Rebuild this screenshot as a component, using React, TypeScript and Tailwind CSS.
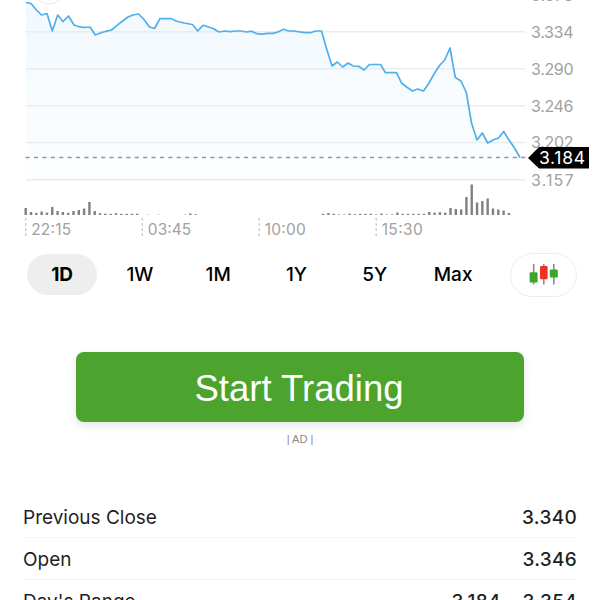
import { clsx } from 'clsx';

type Point = readonly [x: number, y: number];

const pricePoints: readonly Point[] = [
  [26, 2.5], [31, 3.5], [36, 9.5], [41.5, 15], [47, 13.5], [52.3, 31], [57.7, 15], [63, 21.5], [68.5, 16],
  [74, 25], [79, 26.7], [84.5, 27.5], [90, 27], [95.3, 35], [101, 32.7], [106, 31.3], [111.5, 30],
  [117, 25.3], [122.5, 21], [128, 17], [133, 15], [138.5, 14], [144, 19.5], [149.5, 27], [154.5, 28.5],
  [160, 18.5], [171, 18.6], [176, 21], [184, 23], [192.5, 24.5], [197.7, 31], [203, 25.3], [208.5, 27],
  [213.5, 28.7], [219, 32], [224.5, 31], [230, 31.7], [235.5, 31], [241, 31], [246.5, 32], [251.5, 31.2],
  [257, 33.7], [262, 34.2], [267.5, 33.4], [273, 33.4], [278.5, 31.7], [283.5, 29.3], [288.5, 31], [294, 31],
  [299.5, 31.8], [305, 32.7], [310.5, 32.7], [315.5, 31], [321.5, 31], [326.7, 49], [332, 66], [337.3, 62],
  [342.7, 67], [348, 63], [353.3, 66], [358.7, 66.3], [364, 70], [369.5, 64.5], [380.5, 64.5], [385.5, 72.7],
  [396.5, 72.7], [401.7, 83.3], [407, 87.3], [412.5, 91], [417.7, 89], [423.5, 91], [428.7, 83.5],
  [434, 74], [439.5, 65.5], [444.7, 60], [450, 48], [455.3, 77.5], [461, 81], [466.3, 92.5], [471.5, 123],
  [477, 140], [482.3, 133], [487.7, 143], [493, 140], [498.5, 138], [503.7, 131.5], [509, 140], [514.5, 148],
  [520, 157.5],
];

// Bars are spaced evenly from the left edge of the plot
const volumeStep = 5.31;
const volumes: readonly number[] = [
  7, 3, 2.2, 3.5, 2.4, 8, 4, 3, 2.2, 4, 5, 6.5, 13, 4, 1.8, 1.4, 1.2, 1.8, 1.2, 1.2, 1.2, 1.2,
  0, 0.3, 0, 0.3, 0, 0, 0, 0, 0.3, 1.5, 0.8, 0, 0, 0, 0, 0, 0, 0, 0, 0, 0, 0, 0, 0, 0, 0, 0, 0, 0, 0, 0, 0, 0, 0,
  1.2, 2, 1.2, 0.5, 0.5, 1.4, 0.8, 1.2, 1.2, 1.2, 0.5, 1.5, 0.5, 0.6, 2.5, 1.2, 1.2, 1.2, 1.2, 1.2,
  3, 2.4, 2.8, 2.3, 7, 6, 5.5, 18, 30.5, 12.5, 14, 16.5, 6.5, 5.5, 4.5, 2,
];

const gridLines = [
  { y: -5, label: '3.378' },
  { y: 31.8, label: '3.334' },
  { y: 68.8, label: '3.290' },
  { y: 105.8, label: '3.246' },
  { y: 142.6, label: '3.202' },
  { y: 179.8, label: '3.157' },
];

const timeTicks = [
  { x: 25.7, label: '22:15', width: 40 },
  { x: 142.3, label: '03:45', width: 43.5 },
  { x: 259.2, label: '10:00', width: 41 },
  { x: 376.2, label: '15:30', width: 41 },
];

const ranges = [
  { label: '1D', active: true },
  { label: '1W' },
  { label: '1M' },
  { label: '1Y' },
  { label: '5Y' },
  { label: 'Max' },
];

const stats = [
  { label: 'Previous Close', value: '3.340' },
  { label: 'Open', value: '3.346' },
  { label: "Day's Range", value: '3.184 - 3.354' },
];

function PriceChart() {
  const line = pricePoints.map(([x, y]) => `${x},${y}`).join(' ');

  return (
    <svg width="600" height="244" viewBox="0 0 600 244" className="block shrink-0">
      <defs>
        <linearGradient id="area" x1="0" y1="0" x2="0" y2="1">
          <stop offset="0" stopColor="#f2f8fd" />
          <stop offset="0.6" stopColor="#f8fcff" />
          <stop offset="1" stopColor="#fdfeff" />
        </linearGradient>
      </defs>

      <polygon points={`26,180 ${line} 520,180`} fill="url(#area)" />
      {gridLines.map(({ y, label }) => (
        <g key={label}>
          <line x1="26" x2="525" y1={y} y2={y} stroke="#e9edf0" strokeWidth="1.5" />
          <text x="531" y={y + 5.8} fontSize="16" fill="#a1a1a1" textLength="42.5">
            {label}
          </text>
        </g>
      ))}
      <circle cx="49" cy="-12" r="16" fill="#fff" stroke="#e1e8ef" strokeWidth="1" />
      <line x1="25.5" x2="528" y1="157.6" y2="157.6" stroke="#96979d" strokeWidth="1.5" strokeDasharray="4.2 4.2" />
      <polyline points={line} fill="none" stroke="#4fb0ea" strokeWidth="1.7" strokeLinejoin="round" />

      {volumes.map((height, i) => (
        <rect key={i} x={24.5 + i * volumeStep} y={215 - height} width="2.4" height={height} fill="#818184" />
      ))}
      {timeTicks.map(({ x, label, width }) => (
        <g key={label}>
          <line x1={x} x2={x} y1="218" y2="238" stroke="#bdbdbd" strokeWidth="1.2" strokeDasharray="2.5 2.7" />
          <text x={x + 5.5} y="235.4" fontSize="15.5" fill="#a1a1a1" textLength={width}>
            {label}
          </text>
        </g>
      ))}

      <path d="M528 158 L539 147 H589 V168.6 H539 Z" fill="#000" />
      <text x="539" y="164" fontSize="17.5" fill="#fff" textLength="46">
        3.184
      </text>
    </svg>
  );
}

function CandleIcon() {
  return (
    <svg width="32" height="24" viewBox="0 0 32 24">
      <g stroke="#8b8b8b" strokeWidth="1.6">
        <line x1="5.7" x2="5.7" y1="1" y2="21.4" />
        <line x1="15.8" x2="15.8" y1="1" y2="21.4" />
        <line x1="25.8" x2="25.8" y1="1" y2="21.4" />
      </g>
      <rect x="1.6" y="9.2" width="8" height="10.4" rx="1.2" fill="#3fa32c" />
      <rect x="12" y="2.9" width="7.6" height="13.4" rx="1.2" fill="#ee3124" />
      <rect x="21.8" y="6.4" width="8" height="8.2" rx="1.2" fill="#3fa32c" />
    </svg>
  );
}

function RangeTabs() {
  return (
    <div className="flex h-[61px] shrink-0 items-center px-[23px]">
      {ranges.map(({ label, active }) => (
        <button key={label} className="flex w-[78.3px] items-center justify-center">
          <span
            className={clsx(
              'flex h-[41px] w-[70px] items-center justify-center rounded-full pt-0.5 text-[19px] text-black',
              active ? 'bg-[#eeeeee] font-bold' : 'pr-px font-medium',
            )}
          >
            {label}
          </span>
        </button>
      ))}
      <button className="ml-auto flex h-11 w-[67px] items-center justify-center rounded-full border border-[#ededed] bg-white">
        <CandleIcon />
      </button>
    </div>
  );
}

export default function App() {
  return (
    <main className="flex h-[600px] w-[600px] flex-col overflow-hidden bg-white font-['Inter','Liberation_Sans',sans-serif] text-[#1f1f1f]">
      <PriceChart />
      <RangeTabs />

      <section className="mt-[47px] flex shrink-0 flex-col items-center font-['Liberation_Sans',Arial,sans-serif]">
        <button className="h-[70px] w-[448px] rounded-lg bg-[#4ca32e] pt-1 pr-0.5 text-[36.5px] text-white shadow-[0_4px_10px_rgba(0,0,0,0.1)]">
          Start Trading
        </button>
        <p className="mt-[9px] text-[11px] leading-4 text-[#8a8a8a]">| AD |</p>
      </section>

      <dl className="mt-[49px] shrink-0 px-[23px]">
        {stats.map(({ label, value }) => (
          <div key={label} className="flex h-[42px] items-center justify-between border-b border-[#f5f5f5] pt-[3px] text-[19px]">
            <dt>{label}</dt>
            <dd className="font-medium tracking-[0.3px] [word-spacing:1px]">{value}</dd>
          </div>
        ))}
      </dl>
    </main>
  );
}
